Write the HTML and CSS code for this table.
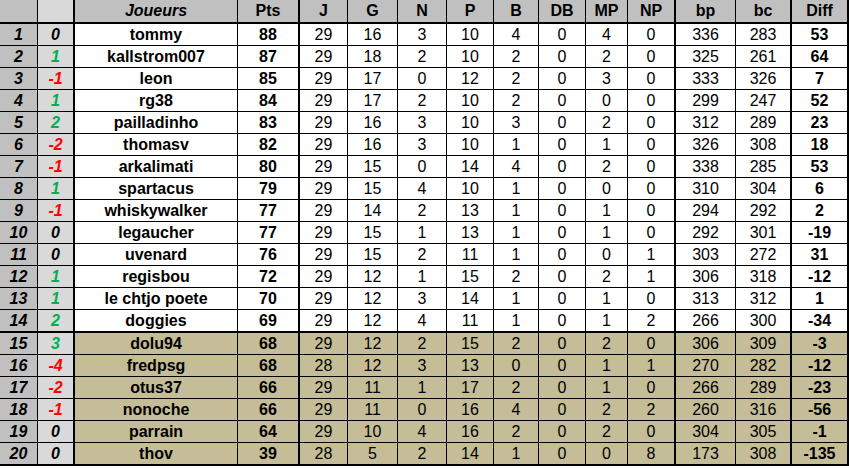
FILE: index.html
```html
<!DOCTYPE html>
<html>
<head>
<meta charset="utf-8">
<link rel="stylesheet" href="styles.css">
</head>
<body>
<div class="table">
  <div class="row head">
    <div class="c rk"></div><div class="c ch"></div><div class="c nm bi">Joueurs</div><div class="c tk">Pts</div>
    <div class="c">J</div><div class="c">G</div><div class="c">N</div><div class="c">P</div><div class="c">B</div><div class="c">DB</div><div class="c">MP</div><div class="c tk">NP</div>
    <div class="c">bp</div><div class="c tk">bc</div><div class="c tk">Diff</div>
  </div>
</div>
<script src="data.js"></script>
</body>
</html>
```
FILE: data.js
```js
const rows = [
[1,0,"tommy",88,29,16,3,10,4,0,4,0,336,283,53],
[2,1,"kallstrom007",87,29,18,2,10,2,0,2,0,325,261,64],
[3,-1,"leon",85,29,17,0,12,2,0,3,0,333,326,7],
[4,1,"rg38",84,29,17,2,10,2,0,0,0,299,247,52],
[5,2,"pailladinho",83,29,16,3,10,3,0,2,0,312,289,23],
[6,-2,"thomasv",82,29,16,3,10,1,0,1,0,326,308,18],
[7,-1,"arkalimati",80,29,15,0,14,4,0,2,0,338,285,53],
[8,1,"spartacus",79,29,15,4,10,1,0,0,0,310,304,6],
[9,-1,"whiskywalker",77,29,14,2,13,1,0,1,0,294,292,2],
[10,0,"legaucher",77,29,15,1,13,1,0,1,0,292,301,-19],
[11,0,"uvenard",76,29,15,2,11,1,0,0,1,303,272,31],
[12,1,"regisbou",72,29,12,1,15,2,0,2,1,306,318,-12],
[13,1,"le chtjo poete",70,29,12,3,14,1,0,1,0,313,312,1],
[14,2,"doggies",69,29,12,4,11,1,0,1,2,266,300,-34],
[15,3,"dolu94",68,29,12,2,15,2,0,2,0,306,309,-3],
[16,-4,"fredpsg",68,28,12,3,13,0,0,1,1,270,282,-12],
[17,-2,"otus37",66,29,11,1,17,2,0,1,0,266,289,-23],
[18,-1,"nonoche",66,29,11,0,16,4,0,2,2,260,316,-56],
[19,0,"parrain",64,29,10,4,16,2,0,2,0,304,305,-1],
[20,0,"thov",39,28,5,2,14,1,0,0,8,173,308,-135]
];
const table = document.querySelector('.table');
const thick = {3:1, 11:1, 13:1, 14:1};
rows.forEach((r, i) => {
  const row = document.createElement('div');
  row.className = 'row' + (i >= 14 ? ' rel' : '') + (i === 13 || i === 19 ? ' tb' : '');
  r.forEach((v, j) => {
    const c = document.createElement('div');
    let cls = 'c';
    if (j === 0) cls += ' rk bi';
    else if (j === 1) cls += ' ch bi' + (v > 0 ? ' up' : v < 0 ? ' down' : '');
    else if (j === 2) cls += ' nm b';
    else if (j === 3 || j === 14) cls += ' b';
    if (thick[j]) cls += ' tk';
    c.className = cls;
    c.textContent = v;
    row.appendChild(c);
  });
  table.appendChild(row);
});
```
FILE: styles.css
```css
html, body {
  margin: 0;
  padding: 0;
  background: #ffffff;
}
.table {
  display: flex;
  flex-direction: column;
  width: 849px;
  font-family: "Liberation Sans", Arial, sans-serif;
  font-size: 16px;
  color: #000;
}
.row {
  display: grid;
  grid-template-columns: 38px 37px 163px 62px 48px 50px 49px 47px 45px 47px 42px 48px 60px 56px 57px;
  height: 22px;
  background: #ffffff;
}
.row.head {
  height: 24px;
  background: #c0c0c0;
  font-weight: bold;
}
.row.head .c {
  border-bottom-width: 2px;
}
.row.tb {
  height: 23px;
}
.row.tb .c {
  border-bottom-width: 2px;
}
.row.rel {
  background: #c4bd97;
}
.c {
  box-sizing: border-box;
  border-right: 1px solid #000;
  border-bottom: 1px solid #000;
  display: flex;
  align-items: center;
  justify-content: center;
  line-height: 1;
  white-space: nowrap;
}
.c.tk {
  border-right-width: 2px;
}
.c.rk {
  background: #c0c0c0;
}
.c.ch {
  background: #d9d9d9;
  border-right-width: 2px;
}
.b { font-weight: bold; }
.bi { font-weight: bold; font-style: italic; }
.up { color: #00b050; }
.down { color: #ff0000; }
```
